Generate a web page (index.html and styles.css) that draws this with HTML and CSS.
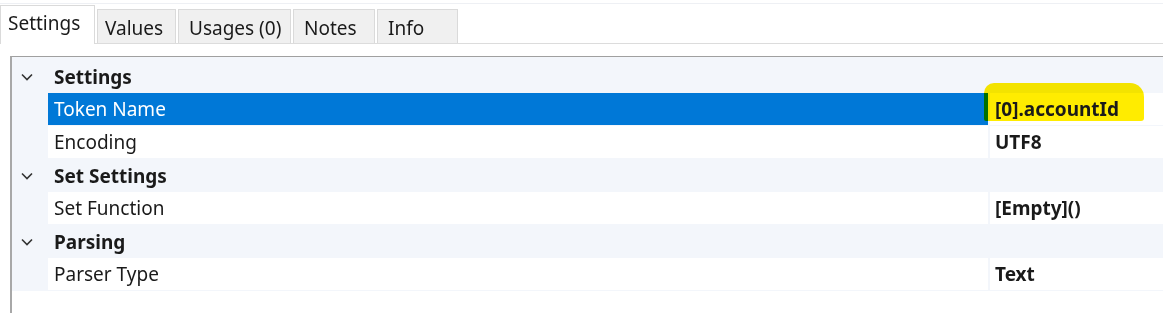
FILE: index.html
```html
<!DOCTYPE html>
<html lang="en">
<head>
    <meta charset="UTF-8">
    <title>Token Properties</title>
    <link rel="stylesheet" href="styles.css">
</head>
<body>
    <div class="top-edge"></div>
    <div class="tabs">
        <div class="tab active">Settings</div>
        <div class="tab">Values</div>
        <div class="tab">Usages (0)</div>
        <div class="tab">Notes</div>
        <div class="tab">Info</div>
    </div>
    <div class="panel">
        <div class="grid">
            <div class="rows">
                <div class="category">
                    <span class="chevron"><svg width="12" height="8" viewBox="0 0 12 8"><path d="M1 1.5 L6 6.5 L11 1.5" fill="none" stroke="#333" stroke-width="1.6"/></svg></span>
                    <span class="cat-name">Settings</span>
                </div>
                <div class="prop selected">
                    <div class="prop-name">Token Name</div>
                    <div class="prop-value">
                        <span class="marker"></span>
                        <span class="value-text">[0].accountId</span>
                    </div>
                </div>
                <div class="prop">
                    <div class="prop-name">Encoding</div>
                    <div class="prop-value"><span class="value-text">UTF8</span></div>
                </div>
                <div class="category">
                    <span class="chevron"><svg width="12" height="8" viewBox="0 0 12 8"><path d="M1 1.5 L6 6.5 L11 1.5" fill="none" stroke="#333" stroke-width="1.6"/></svg></span>
                    <span class="cat-name">Set Settings</span>
                </div>
                <div class="prop">
                    <div class="prop-name">Set Function</div>
                    <div class="prop-value"><span class="value-text">[Empty]()</span></div>
                </div>
                <div class="category">
                    <span class="chevron"><svg width="12" height="8" viewBox="0 0 12 8"><path d="M1 1.5 L6 6.5 L11 1.5" fill="none" stroke="#333" stroke-width="1.6"/></svg></span>
                    <span class="cat-name">Parsing</span>
                </div>
                <div class="prop">
                    <div class="prop-name">Parser Type</div>
                    <div class="prop-value"><span class="value-text">Text</span></div>
                </div>
            </div>
        </div>
    </div>
</body>
</html>
```

FILE: styles.css
```css
body {
    margin: 0;
    padding: 0;
    background-color: #fff;
    font-family: "Noto Sans", "Open Sans", sans-serif;
    font-size: 19px;
    color: #1a1a1a;
    overflow: hidden;
}
.top-edge {
    height: 3px;
    border-bottom: 1px solid #eef0f4;
}
.tabs {
    display: flex;
    align-items: flex-end;
    gap: 2px;
    padding-top: 2px;
    border-bottom: 1px solid #dcdcdc;
    height: 40px;
    box-sizing: border-box;
}
.tab {
    box-sizing: border-box;
    height: 34px;
    padding: 0 7px;
    line-height: 36px;
    background-color: #f0f0f0;
    border: 1px solid #dadada;
    border-bottom: none;
    color: #1a1a1a;
    white-space: nowrap;
}
.tab:nth-child(2) { width: 79px; }
.tab:nth-child(3) { width: 113px; padding-left: 10px; }
.tab:nth-child(4) { width: 82px; padding-left: 10px; }
.tab:nth-child(5) { width: 81px; padding-left: 10px; }
.tab.active {
    width: 95px;
    height: 39px;
    line-height: 34px;
    background-color: #fff;
    padding-left: 7px;
    margin-bottom: -1px;
}
.panel {
    padding: 12px 0 0 10px;
}
.grid {
    border-top: 1px solid #a0a0a0;
    border-left: 2px solid #a8a8a8;
    background-color: #fff;
    height: 260px;
}
.rows {
    background-color: #f3f6fb;
    padding: 3px 0 1px;
}
.category {
    display: flex;
    align-items: center;
    height: 33px;
    font-weight: bold;
}
.chevron {
    width: 42px;
    padding-left: 9px;
    box-sizing: border-box;
    display: flex;
    align-items: center;
}
.prop {
    display: flex;
    height: 32px;
    margin-left: 36px;
    margin-bottom: 1px;
}
.prop:last-child {
    margin-bottom: 0;
}
.prop-name {
    flex: 0 0 940px;
    padding-left: 6px;
    box-sizing: border-box;
    line-height: 32px;
    background-color: #fff;
}
.prop-value {
    position: relative;
    flex: 1;
    margin-left: 2px;
    padding-left: 5px;
    line-height: 32px;
    background-color: #fff;
    font-weight: bold;
}
.prop.selected .prop-name {
    background-color: #0078d7;
    color: #fff;
}
.value-text {
    position: relative;
}
.marker {
    position: absolute;
    left: -6px;
    top: -10px;
    width: 160px;
    height: 38px;
    background-color: #ffec00;
    border-radius: 10px 14px 3px 2px;
    mix-blend-mode: multiply;
}
```
